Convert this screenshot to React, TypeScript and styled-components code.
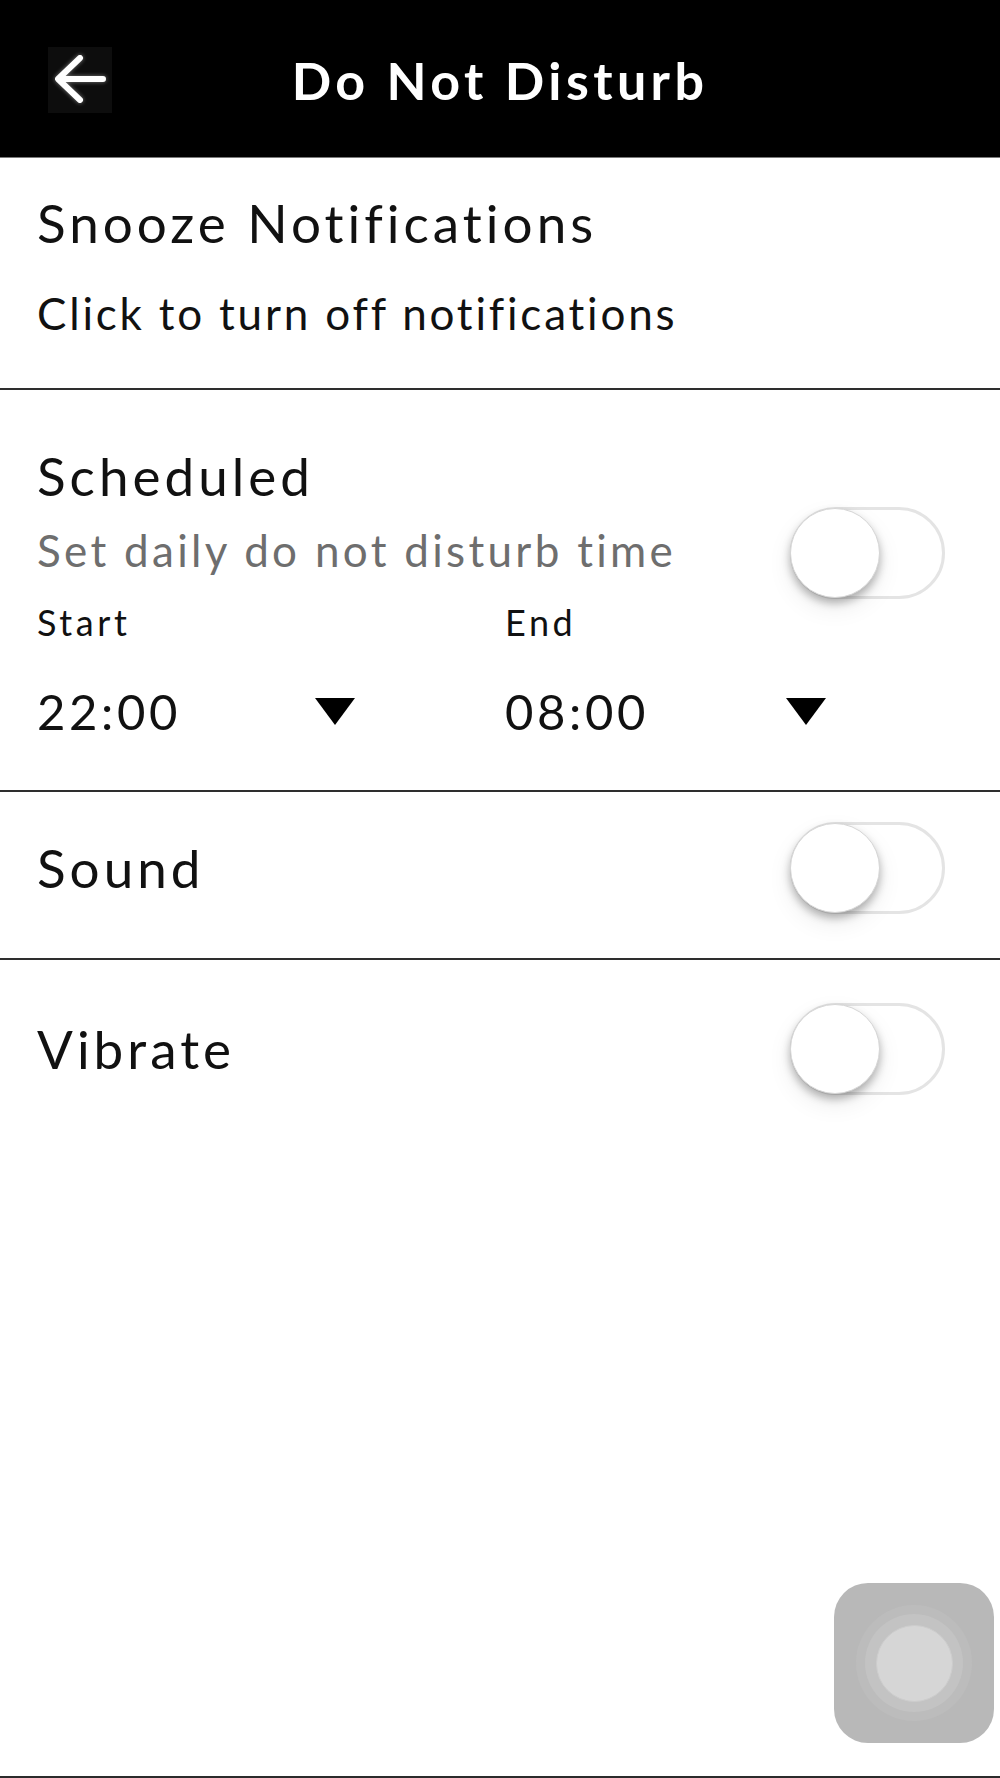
import React from "react";
import styled, { createGlobalStyle } from "styled-components";

const GlobalStyle = createGlobalStyle`
  *, *::before, *::after { box-sizing: border-box; }
  body {
    margin: 0;
    background: #fff;
    color: #111;
    font-family: Lato, "Open Sans", sans-serif;
  }
`;

const Screen = styled.div`
  position: relative;
  min-height: 1778px;
  border-bottom: 2px solid #2b2b2b;
  background: #fff;
`;

const Header = styled.header`
  height: 158px;
  padding-top: 3px;
  background: #000;
  border-bottom: 1px solid #7a7a7a;
  display: grid;
  grid-template-columns: 1fr auto 1fr;
  align-items: center;
`;

const BackButton = styled.button`
  justify-self: start;
  margin-left: 48px;
  width: 64px;
  height: 66px;
  padding: 0;
  border: none;
  background: #0d0d0d;
  display: flex;
  align-items: center;
  justify-content: center;
  cursor: pointer;

  svg {
    filter: drop-shadow(0 0 2px rgba(255, 255, 255, 0.45));
  }
`;

const Title = styled.h1`
  margin: 0;
  color: #fff;
  font-size: 52px;
  line-height: 60px;
  font-weight: 700;
  letter-spacing: 4.4px;
`;

const Section = styled.section<{ $top: number; $bottom: number; $divider?: boolean }>`
  padding: ${(p) => p.$top}px 55px ${(p) => p.$bottom}px 37px;
  border-top: ${(p) => (p.$divider ? "2px solid #2e2e2e" : "none")};
`;

const Heading = styled.div`
  font-size: 53px;
  line-height: 64px;
  letter-spacing: 4px;
  color: #111;
`;

const Hint = styled.div<{ $muted?: boolean; $top?: number }>`
  margin-top: ${(p) => p.$top ?? 0}px;
  font-size: 44px;
  line-height: 54px;
  letter-spacing: ${(p) => (p.$muted ? 3.3 : 2.8)}px;
  color: ${(p) => (p.$muted ? "#6e6e6e" : "#111")};
`;

const Row = styled.div<{ $align?: string; $top?: number }>`
  display: flex;
  justify-content: space-between;
  align-items: ${(p) => p.$align ?? "center"};
  margin-top: ${(p) => p.$top ?? 0}px;
`;

const TimeGrid = styled.div<{ $top: number }>`
  display: grid;
  grid-template-columns: 468px 1fr;
  margin-top: ${(p) => p.$top}px;
`;

const Label = styled.div`
  font-size: 36px;
  line-height: 42px;
  letter-spacing: 3.6px;
  color: #111;
`;

const Picker = styled.div<{ $width: number }>`
  width: ${(p) => p.$width}px;
  display: flex;
  align-items: center;
  justify-content: space-between;
`;

const Time = styled.span`
  font-size: 49px;
  line-height: 58px;
  letter-spacing: 3.6px;
  color: #111;
`;

const Caret = styled.span`
  width: 0;
  height: 0;
  border-left: 20px solid transparent;
  border-right: 20px solid transparent;
  border-top: 27px solid #000;
`;

const Track = styled.div`
  position: relative;
  flex-shrink: 0;
  width: 155px;
  height: 92px;
  border-radius: 46px;
  border: 3px solid #e4e4e4;
  background: #fff;
`;

const Knob = styled.span`
  position: absolute;
  left: -3px;
  top: -2px;
  width: 90px;
  height: 90px;
  border-radius: 50%;
  background: #fff;
  border: 1px solid #d6d6d6;
  box-shadow: 0 5px 8px rgba(0, 0, 0, 0.28), 0 10px 24px rgba(0, 0, 0, 0.08);
`;

const AssistiveTouch = styled.div`
  position: absolute;
  left: 834px;
  top: 1583px;
  width: 160px;
  height: 160px;
  border-radius: 34px;
  background: #b8b8b8;
  display: flex;
  align-items: center;
  justify-content: center;
`;

const Ring = styled.div<{ $size: number; $color: string; $edge?: string }>`
  width: ${(p) => p.$size}px;
  height: ${(p) => p.$size}px;
  border-radius: 50%;
  background: ${(p) => p.$color};
  border: ${(p) => (p.$edge ? `1px solid ${p.$edge}` : "none")};
  display: flex;
  align-items: center;
  justify-content: center;
`;

const Toggle = () => (
  <Track>
    <Knob />
  </Track>
);

export default function App() {
  return (
    <Screen>
      <GlobalStyle />
      <Header>
        <BackButton aria-label="Back">
          <svg width="64" height="66" viewBox="0 0 64 66" fill="none">
            <path
              d="M55 32H11M32 11L10 32L32 53"
              stroke="#fff"
              strokeWidth="6"
              strokeLinecap="round"
              strokeLinejoin="round"
            />
          </svg>
        </BackButton>
        <Title>Do Not Disturb</Title>
        <span />
      </Header>

      <Section $top={33} $bottom={48}>
        <Heading>Snooze Notifications</Heading>
        <Hint $top={31}>Click to turn off notifications</Hint>
      </Section>

      <Section $divider $top={54} $bottom={50}>
        <Heading>Scheduled</Heading>
        <Row $align="flex-start" $top={-1}>
          <Hint $muted $top={16}>Set daily do not disturb time</Hint>
          <Toggle />
        </Row>
        <TimeGrid $top={2}>
          <Label>Start</Label>
          <Label>End</Label>
        </TimeGrid>
        <TimeGrid $top={39}>
          <Picker $width={318}>
            <Time>22:00</Time>
            <Caret />
          </Picker>
          <Picker $width={321}>
            <Time>08:00</Time>
            <Caret />
          </Picker>
        </TimeGrid>
      </Section>

      <Section $divider $top={30} $bottom={44}>
        <Row>
          <Heading>Sound</Heading>
          <Toggle />
        </Row>
      </Section>

      <Section $divider $top={43} $bottom={40}>
        <Row>
          <Heading>Vibrate</Heading>
          <Toggle />
        </Row>
      </Section>

      <AssistiveTouch>
        <Ring $size={116} $color="#bcbcbc">
          <Ring $size={98} $color="#c3c3c3">
            <Ring $size={77} $color="#d6d6d6" $edge="#cdcdcd" />
          </Ring>
        </Ring>
      </AssistiveTouch>
    </Screen>
  );
}
